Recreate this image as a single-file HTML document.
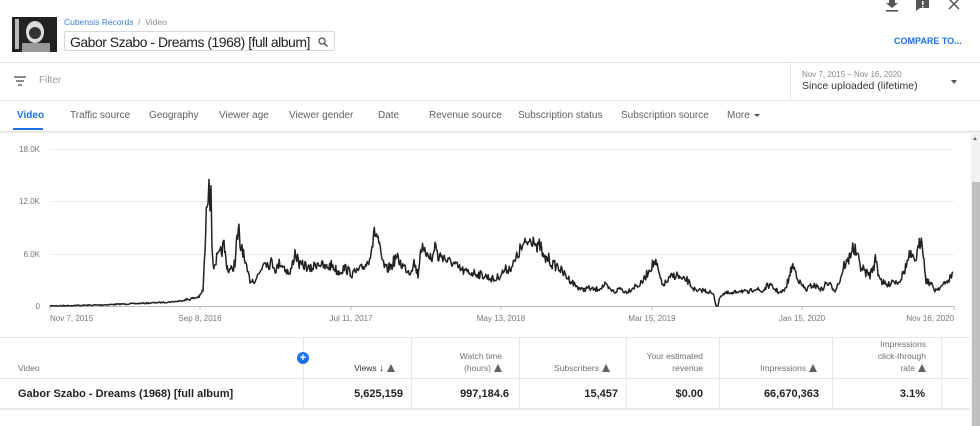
<!DOCTYPE html>
<html><head><meta charset="utf-8"><style>
*{margin:0;padding:0;box-sizing:border-box}
body{width:980px;height:426px;overflow:hidden;background:#fff;font-family:"Liberation Sans",sans-serif;position:relative;color:#111}
.a{position:absolute;white-space:nowrap}
.tab{position:absolute;top:110px;font-size:10px;color:#606060}
.th{position:absolute;font-size:8.5px;color:#707070;text-align:right;line-height:12px}
.td{position:absolute;top:388px;font-size:11px;font-weight:bold;color:#222;text-align:right}
.vl{position:absolute;top:338px;height:70px;width:1px;background:#e8e8e8}
.tri{display:inline-block;width:0;height:0;border-left:4px solid transparent;border-right:4px solid transparent;border-bottom:8px solid #606060;vertical-align:-1px;margin-left:3px}
</style></head><body>
<div class="a" style="left:12px;top:17px;width:45px;height:35px;background:#222;overflow:hidden">
<div style="position:absolute;left:14px;top:4px;width:18px;height:22px;border-radius:50%;background:#ddd"></div>
<div style="position:absolute;left:17px;top:10px;width:12px;height:12px;border-radius:50%;background:#333"></div>
<div style="position:absolute;left:3px;top:2px;width:4px;height:30px;background:#bbb"></div>
<div style="position:absolute;left:10px;top:26px;width:28px;height:9px;background:#999"></div>
</div>
<div class="a" style="left:64px;top:17px;font-size:8.5px;color:#3a7fd8">Cubensis Records <span style="color:#888">&nbsp;/&nbsp; Video</span></div>
<div class="a" style="left:64px;top:31px;width:271px;height:20px;border:1px solid #d8d8d8;border-radius:2px;font-size:14px;letter-spacing:-0.5px;padding:2px 0 0 5px;color:#222">Gabor Szabo - Dreams (1968) [full album]
<svg style="position:absolute;right:6px;top:5px" width="10" height="10" viewBox="0 0 10 10"><circle cx="4" cy="4" r="3" fill="none" stroke="#555" stroke-width="1.3"/><path d="M6 6L9.5 9.5" stroke="#555" stroke-width="1.5"/></svg></div>
<svg class="a" style="left:885px;top:0" width="14" height="12" viewBox="0 0 14 12"><path d="M4 0h6v3h3l-6 5-6-5h3z" fill="#555"/><rect x="1" y="10" width="12" height="1.6" fill="#555"/></svg>
<svg class="a" style="left:916px;top:0" width="14" height="12" viewBox="0 0 14 12"><path d="M0 0h13v8H4l-4 3z" fill="#555"/><rect x="6" y="1" width="1.5" height="4" fill="#fff"/><rect x="6" y="6" width="1.5" height="1.5" fill="#fff"/></svg>
<svg class="a" style="left:948px;top:0" width="12" height="10" viewBox="0 0 12 10"><path d="M1 -1L11 9M11 -1L1 9" stroke="#555" stroke-width="1.5"/></svg>
<div class="a" style="left:894px;top:36px;font-size:9px;font-weight:bold;color:#1a73e8">COMPARE TO...</div>
<div class="a" style="left:0;top:62px;width:980px;height:1px;background:#e5e5e5"></div>
<svg class="a" style="left:14px;top:76px" width="14" height="10" viewBox="0 0 14 10"><path d="M0 1h12M2 5h8M4 9h4" stroke="#666" stroke-width="1.4"/></svg>
<div class="a" style="left:39px;top:75px;font-size:10px;color:#999">Filter</div>
<div class="a" style="left:790px;top:63px;width:1px;height:37px;background:#e5e5e5"></div>
<div class="a" style="left:802px;top:70px;font-size:8px;color:#888">Nov 7, 2015 – Nov 16, 2020</div>
<div class="a" style="left:802px;top:80px;font-size:10.5px;color:#333">Since uploaded (lifetime)</div>
<div class="a" style="left:951px;top:80px;width:0;height:0;border-left:3.5px solid transparent;border-right:3.5px solid transparent;border-top:4px solid #555"></div>
<div class="a" style="left:0;top:100px;width:980px;height:1px;background:#e5e5e5"></div>
<div class="tab" style="left:17px;color:#1a73e8;font-weight:bold">Video</div>
<div class="a" style="left:13px;top:128px;width:30px;height:2px;background:#1a73e8"></div>
<div class="tab" style="left:70px">Traffic source</div>
<div class="tab" style="left:149px">Geography</div>
<div class="tab" style="left:219px">Viewer age</div>
<div class="tab" style="left:289px">Viewer gender</div>
<div class="tab" style="left:378px">Date</div>
<div class="tab" style="left:429px">Revenue source</div>
<div class="tab" style="left:518px">Subscription status</div>
<div class="tab" style="left:621px">Subscription source</div>
<div class="tab" style="left:727px">More</div>
<div class="a" style="left:754px;top:114px;width:0;height:0;border-left:3px solid transparent;border-right:3px solid transparent;border-top:3.5px solid #555"></div>
<div class="a" style="left:0;top:131px;width:980px;height:3px;background:linear-gradient(#ddd,#fff)"></div>
<div class="a" style="left:971px;top:134px;width:9px;height:292px;background:#f1f1f1"></div>
<div class="a" style="left:972px;top:182px;width:8px;height:244px;background:#c1c1c1"></div>
<div class="a" style="left:973px;top:137px;width:0;height:0;border-left:2px solid transparent;border-right:2px solid transparent;border-bottom:3px solid #666"></div>
<svg class="a" style="left:0;top:134px" width="970" height="204" viewBox="0 134 970 204">
<g stroke="#ececec" stroke-width="1"><path d="M50 149.5H954M50 201.5H954M50 254.5H954"/></g>
<path d="M50 306.5H954" stroke="#bbb"/>
<g stroke="#bbb"><path d="M50 306v4M200 306v4M351 306v4M501 306v4M652 306v4M802 306v4M954 306v4"/></g>
<g font-size="8" fill="#777" font-family="Liberation Sans,sans-serif">
<text x="40" y="152" text-anchor="end">18.0K</text><text x="40" y="204" text-anchor="end">12.0K</text><text x="40" y="257" text-anchor="end">6.0K</text><text x="40" y="309" text-anchor="end">0</text>
<text x="50" y="321">Nov 7, 2015</text><text x="200" y="321" text-anchor="middle">Sep 8, 2016</text><text x="351" y="321" text-anchor="middle">Jul 11, 2017</text><text x="501" y="321" text-anchor="middle">May 13, 2018</text><text x="652" y="321" text-anchor="middle">Mar 15, 2019</text><text x="802" y="321" text-anchor="middle">Jan 15, 2020</text><text x="954" y="321" text-anchor="end">Nov 16, 2020</text></g>
<polyline id="ln" fill="none" stroke="#222" stroke-width="1.5" stroke-linejoin="round" points="50,306 100,305 150,303 170,302 180,301 190,299 195,298 200,296 203,290 205,250 207,200 208,195 209,165 210,200 211,180 212,240 213,268 216,260 220,255 222,250 224,245 226,260 228,270 232,270 235,262 237,240 239,232 240,250 242,245 245,265 250,280 255,280 260,272 265,258 268,265 272,262 276,270 280,262 285,268 290,275 295,252 300,266 305,265 310,270 318,262 325,268 332,265 338,272 345,268 352,274 360,270 368,262 372,245 375,232 378,238 381,258 386,270 392,265 396,257 402,265 410,272 414,262 418,275 421,245 424,255 428,250 432,262 435,242 438,258 442,255 448,262 452,262 458,268 465,272 475,273 485,276 495,280 500,275 505,270 510,268 515,262 520,250 525,245 530,240 535,237 537,250 540,245 544,260 548,258 553,265 558,266 562,272 568,278 575,285 582,290 588,288 595,290 600,288 605,285 610,290 615,292 620,288 625,292 630,290 635,286 640,285 645,278 650,268 655,262 658,270 662,285 667,282 672,276 677,275 682,280 687,280 692,287 697,292 702,290 710,292 714,296 716,306 718,306 720,296 725,293 732,294 740,290 748,293 755,288 762,292 768,285 772,287 776,290 780,293 785,290 790,275 792,265 795,270 800,283 806,290 812,285 818,287 822,290 826,283 830,285 835,290 840,280 844,265 848,262 850,255 852,248 856,252 860,265 865,272 870,275 874,265 876,258 878,272 882,282 888,286 892,280 896,282 900,280 904,272 908,260 910,255 914,262 918,252 920,242 922,235 924,262 926,280 930,283 935,290 940,287 945,284 950,278 953,273"/>
</svg>
<script>
(function(){var el=document.getElementById('ln');var p=el.getAttribute('points').trim().split(/\s+/).map(function(s){return s.split(',').map(Number)});
var out=[],seed=7;function r(){seed=(seed*16807)%2147483647;return seed/2147483647-0.5;}
for(var i=0;i<p.length-1;i++){var a=p[i],b=p[i+1];var n=Math.max(1,Math.round((b[0]-a[0])/0.8));for(var k=0;k<n;k++){var t=k/n,x=a[0]+(b[0]-a[0])*t,y=a[1]+(b[1]-a[1])*t;var amp=(306-y)*0.12+0.5;if(y>300)amp=0.6;out.push(x.toFixed(1)+','+Math.min(306,y+r()*amp*2).toFixed(1));}}
out.push(p[p.length-1].join(','));el.setAttribute('points',out.join(' '));})();
</script>
<div class="a" style="left:0;top:337px;width:970px;height:1px;background:#e8e8e8"></div>
<div class="a" style="left:0;top:378px;width:970px;height:1px;background:#e8e8e8"></div>
<div class="a" style="left:0;top:408px;width:970px;height:2px;background:#e8e8e8"></div>
<div class="vl" style="left:303px"></div><div class="vl" style="left:411px"></div><div class="vl" style="left:519px"></div><div class="vl" style="left:626px"></div><div class="vl" style="left:719px"></div><div class="vl" style="left:832px"></div><div class="vl" style="left:941px"></div>
<div class="a" style="left:297px;top:352px;width:12px;height:12px;border-radius:50%;background:#1a73e8;color:#fff;font-size:11px;font-weight:bold;text-align:center;line-height:12px">+</div>
<div class="th" style="left:18px;top:362px;text-align:left">Video</div>
<div class="th" style="right:585px;top:362px;color:#333">Views <span style="font-size:10px">↓</span><span class="tri"></span></div>
<div class="th" style="right:478px;top:350px">Watch time<br>(hours)<span class="tri"></span></div>
<div class="th" style="right:370px;top:362px">Subscribers<span class="tri"></span></div>
<div class="th" style="right:277px;top:350px">Your estimated<br>revenue</div>
<div class="th" style="right:163px;top:362px">Impressions<span class="tri"></span></div>
<div class="th" style="right:54px;top:338px;text-align:right">Impressions<br>click-through<br>rate<span class="tri"></span></div>
<div class="td" style="left:18px;text-align:left">Gabor Szabo - Dreams (1968) [full album]</div>
<div class="td" style="right:577px">5,625,159</div>
<div class="td" style="right:471px">997,184.6</div>
<div class="td" style="right:362px">15,457</div>
<div class="td" style="right:277px">$0.00</div>
<div class="td" style="right:161px">66,670,363</div>
<div class="td" style="right:55px">3.1%</div>
</body></html>
